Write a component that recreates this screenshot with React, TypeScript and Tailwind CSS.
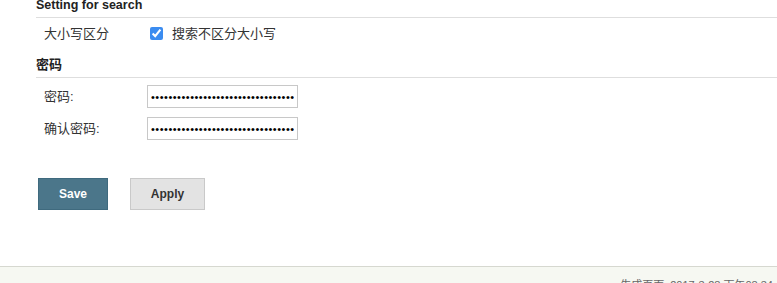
import { useState } from "react";

const font = "font-['Liberation_Sans','Noto_Sans_CJK_SC',sans-serif]";

function SectionTitle({ children, className }: { children: React.ReactNode; className?: string }) {
  return (
    <div className={`border-b border-[#dedede] text-[12.5px] font-bold text-[#222] ${className ?? ""}`}>
      {children}
    </div>
  );
}

function PasswordRow({ label, value }: { label: string; value: string }) {
  return (
    <div className="flex items-center h-[23px]">
      <label className="w-[103px] text-[13px] text-[#333]">{label}</label>
      <input
        type="password"
        defaultValue={value}
        className="w-[151px] h-[23px] border border-[#c8c8c8] px-[3px] text-[11px] tracking-[0.5px] outline-none"
      />
    </div>
  );
}

export default function App() {
  const [ignoreCase, setIgnoreCase] = useState(true);
  const pw = "abcdefghijklmnopqrstuvwxyzabcdefghij";

  return (
    <div className={`w-[777px] h-[283px] overflow-hidden bg-white flex flex-col ${font}`}>
      <div className="pl-[36px]">
        <SectionTitle className="h-[18px] leading-[10px]">Setting for search</SectionTitle>
        <div className="flex items-center h-[31px] pl-[8px]">
          <span className="w-[106px] text-[13px] text-[#333]">大小写区分</span>
          <input
            type="checkbox"
            checked={ignoreCase}
            onChange={(e) => setIgnoreCase(e.target.checked)}
            className="w-[13px] h-[13px] accent-[#3b8cf0] m-0"
          />
          <span className="ml-[9px] text-[13px] text-[#333]">搜索不区分大小写</span>
        </div>
        <SectionTitle className="h-[29px] pt-[6px] text-[13px]">密码</SectionTitle>
        <div className="pl-[8px] pt-[7px] flex flex-col gap-[9px]">
          <PasswordRow label="密码:" value={pw} />
          <PasswordRow label="确认密码:" value={pw} />
        </div>
      </div>

      <div className="flex gap-[22px] pl-[38px] mt-[38px]">
        <button className="w-[70px] h-[32px] bg-[#4b768a] border border-[#3f6a7e] text-white text-[12px] font-bold">
          Save
        </button>
        <button className="w-[75px] h-[32px] bg-[#e3e3e3] border border-[#c9c9c9] text-[#333] text-[12px] font-bold">
          Apply
        </button>
      </div>

      <div className="mt-auto h-[17px] border-t border-[#d6d8d0] bg-[#f6f8f2] flex justify-end pr-[4px]">
        <span className="text-[11px] text-[#666] leading-none pt-[13px] whitespace-nowrap">
          生成页面: 2017-3-28 下午08:34
        </span>
      </div>
    </div>
  );
}
